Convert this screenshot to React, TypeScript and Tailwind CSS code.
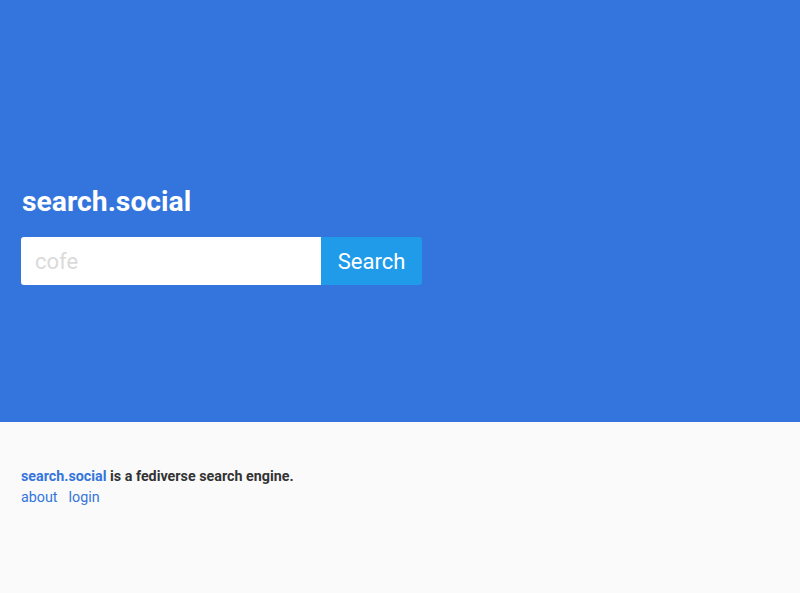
import React from 'react';

const App = () => {
  return (
    <div className="min-h-screen bg-[#fafafa] font-['Roboto',sans-serif]">
      {/* Hero */}
      <section className="h-[422px] bg-[#3475dd] px-[21px] pt-[188px]">
        <h1 className="text-[28.3px] font-bold text-white leading-[28px] mb-[21px] pl-px">search.social</h1>
        <form className="flex" onSubmit={(e) => e.preventDefault()}>
          <input
            type="text"
            placeholder="cofe"
            className="w-[300px] h-[48px] bg-white rounded-l-[3px] pl-[14px] pr-[13px] text-[22px] text-gray-800 placeholder:text-[#dadada] outline-none"
          />
          <button
            type="submit"
            className="w-[101px] h-[48px] bg-[#1f9bea] rounded-r-[3px] text-[22px] text-white"
          >
            Search
          </button>
        </form>
      </section>

      {/* Footer */}
      <footer className="px-[21px] pt-[44px] text-[14.3px] leading-[21px]">
        <p className="font-bold text-[#333]">
          <a href="#" className="text-[#3475dd]">search.social</a> is a fediverse search engine.
        </p>
        <div className="flex gap-[11px] text-[#3475dd]">
          <a href="#">about</a>
          <a href="#">login</a>
        </div>
      </footer>
    </div>
  );
};

export default App;
